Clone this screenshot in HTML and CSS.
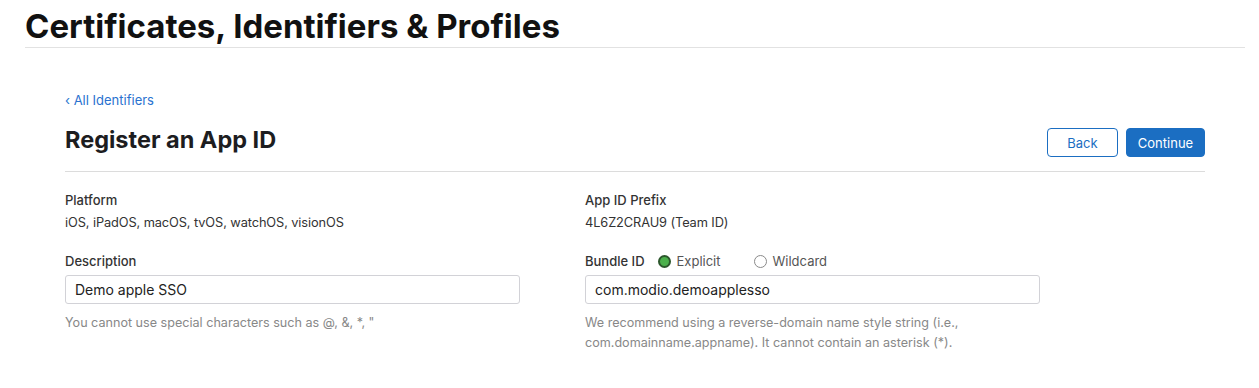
FILE: index.html
```html
<!DOCTYPE html>
<html lang="en">
<head>
<meta charset="utf-8">
<title>Register an App ID</title>
<link rel="stylesheet" href="styles.css">
</head>
<body>
<header class="top">
  <h1 class="top-title">Certificates, Identifiers &amp; Profiles</h1>
</header>
<main class="page">
  <a class="back-link" href="#">‹ All Identifiers</a>
  <div class="head-row">
    <h2 class="page-title">Register an App ID</h2>
    <div class="actions">
      <button class="btn btn-outline" type="button">Back</button>
      <button class="btn btn-primary" type="button">Continue</button>
    </div>
  </div>
  <div class="form-grid">
    <div class="field">
      <div class="label">Platform</div>
      <div class="value">iOS, iPadOS, macOS, tvOS, watchOS, visionOS</div>
    </div>
    <div class="field">
      <div class="label">App ID Prefix</div>
      <div class="value">4L6Z2CRAU9 (Team ID)</div>
    </div>
    <div class="field">
      <div class="label">Description</div>
      <input class="text-input" type="text" value="Demo apple SSO">
      <div class="help">You cannot use special characters such as @, &amp;, *, "</div>
    </div>
    <div class="field">
      <div class="label-row">
        <span class="label">Bundle ID</span>
        <label class="radio"><span class="dot dot-on"></span>Explicit</label>
        <label class="radio radio-2"><span class="dot"></span>Wildcard</label>
      </div>
      <input class="text-input" type="text" value="com.modio.demoapplesso">
      <div class="help">We recommend using a reverse-domain name style string (i.e.,<br>com.domainname.appname). It cannot contain an asterisk (*).</div>
    </div>
  </div>
</main>
</body>
</html>
```
FILE: styles.css
```css
* { box-sizing: border-box; }
body {
  margin: 0;
  font-family: Inter, "Noto Sans", sans-serif;
  color: #333;
  background: #fff;
}
.top {
  margin: 0 14px 0 25px;
  border-bottom: 1px solid #e2e2e2;
}
.top-title {
  margin: 0;
  padding: 7px 0 1px;
  font-size: 33px;
  line-height: 39px;
  font-weight: 700;
  color: #111;
}
.page {
  padding: 43px 54px 0 65px;
}
.back-link {
  display: block;
  font-size: 13px;
  line-height: 18px;
  color: #2a72cf;
  text-decoration: none;
}
.head-row {
  display: flex;
  justify-content: space-between;
  align-items: flex-start;
  margin-top: 18px;
  padding-bottom: 14px;
  border-bottom: 1px solid #dcdcdc;
}
.page-title {
  margin: 0;
  font-size: 23.5px;
  line-height: 26px;
  font-weight: 700;
  color: #1d1d1f;
}
.actions {
  display: flex;
  gap: 8px;
  margin-top: 1px;
}
.btn {
  height: 29px;
  border-radius: 4px;
  font-family: inherit;
  font-size: 13px;
  border: 1px solid #1b6ec2;
  padding: 0;
}
.btn-outline {
  width: 71px;
  background: #fff;
  color: #1b6ec2;
}
.btn-primary {
  width: 79px;
  background: #1b6ec2;
  color: #fff;
}
.form-grid {
  display: grid;
  grid-template-columns: 520px 1fr;
  row-gap: 20px;
  padding-top: 19px;
}
.field { display: flex; flex-direction: column; }
.label {
  font-size: 13px;
  line-height: 18px;
  font-weight: 500;
  color: #333;
}
.value {
  margin-top: 5px;
  font-size: 12.8px;
  line-height: 18px;
  letter-spacing: -0.1px;
  color: #333;
}
.label-row {
  display: flex;
  align-items: center;
  height: 18px;
}
.radio {
  display: flex;
  align-items: center;
  font-size: 13px;
  color: #555;
  margin-left: 13px;
}
.radio-2 { margin-left: 33px; }
.dot {
  width: 13px;
  height: 13px;
  border-radius: 50%;
  border: 1px solid #8a8a8a;
  background: #fff;
  margin-right: 6px;
}
.dot-on {
  border: 2px solid #2c572c;
  background: #4cb04c;
}
.text-input {
  margin-top: 5px;
  width: 455px;
  height: 29px;
  border: 1px solid #d2d2d7;
  border-radius: 3px;
  padding: 0 9px;
  font-family: inherit;
  font-size: 14px;
  color: #222;
}
.help {
  margin-top: 9px;
  font-size: 12.6px;
  line-height: 20px;
  color: #888;
}
```
